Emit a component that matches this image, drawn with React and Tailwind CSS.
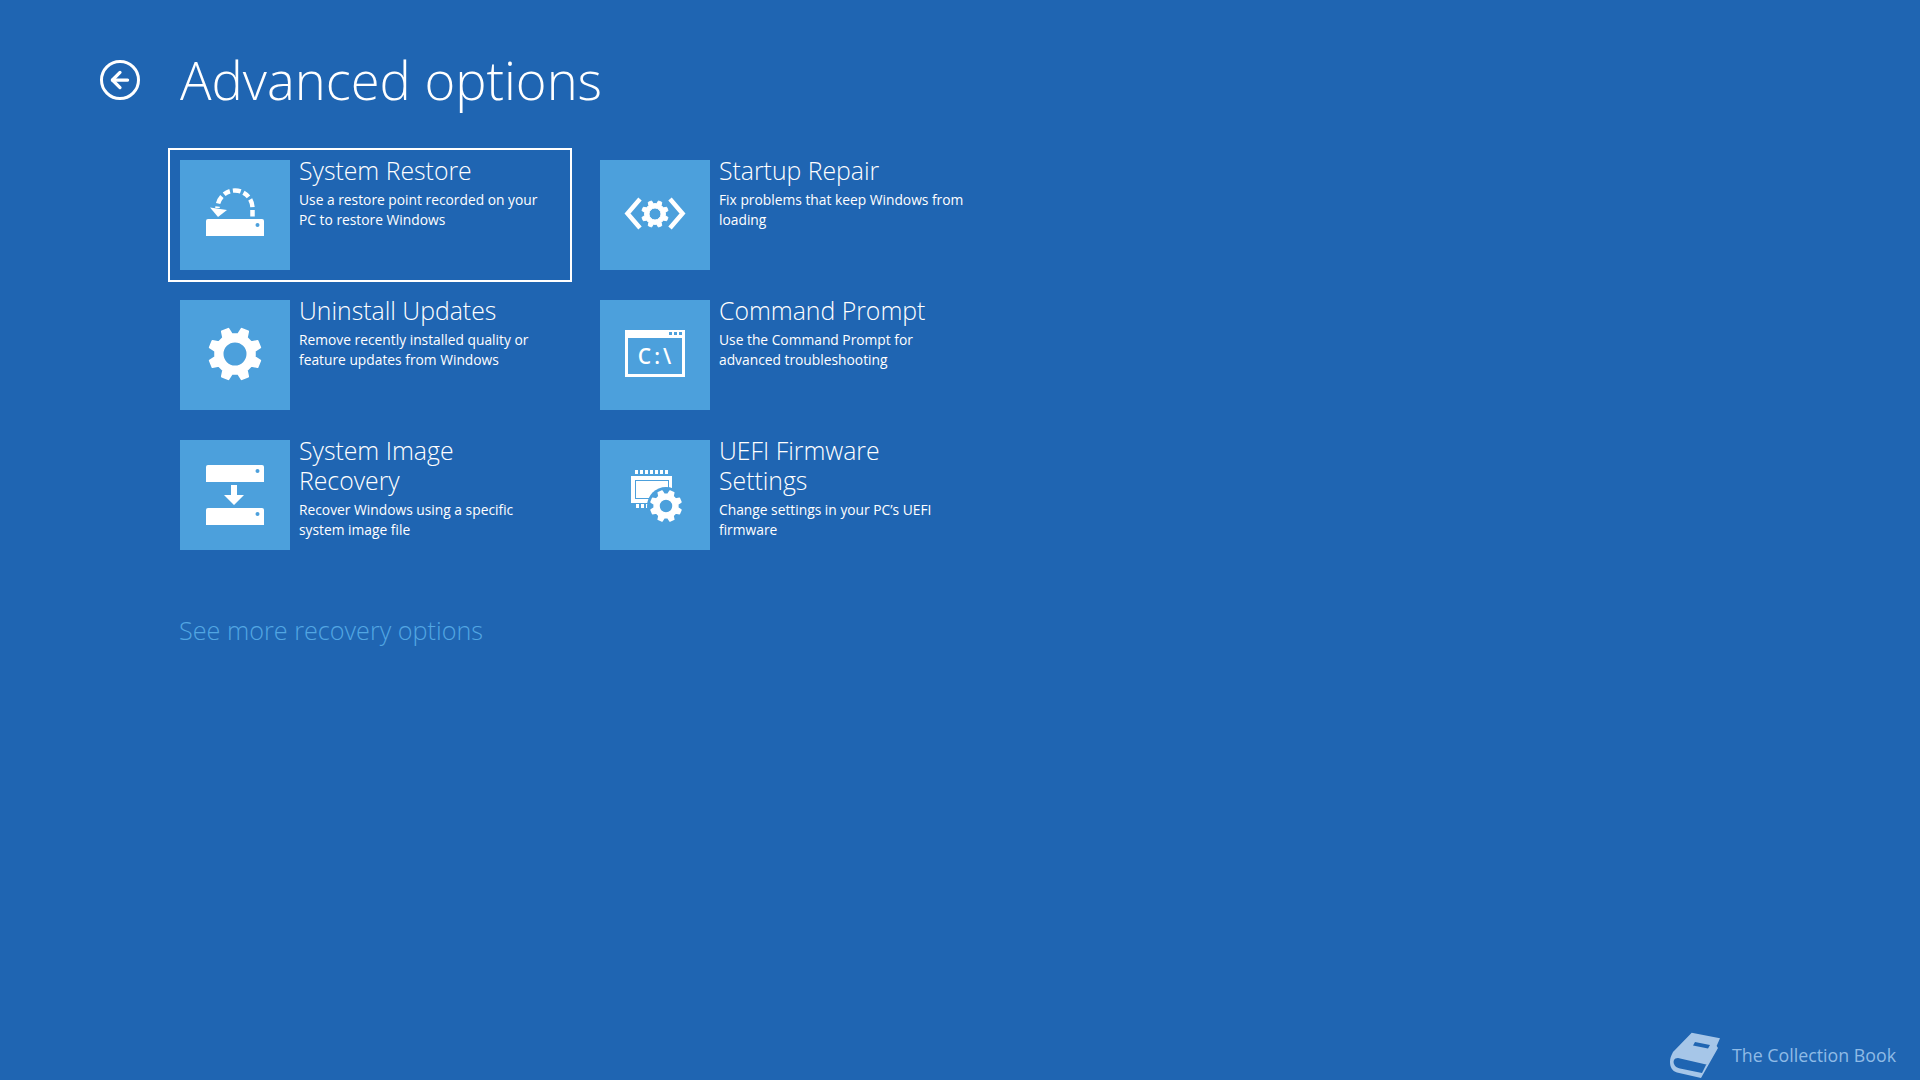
import React from 'react';
import { ArrowLeft } from 'lucide-react';

const TILE = '#4ca0dc';

// builds a toothed wheel outline, hole is cut with evenodd
const gearPath = (cx, cy, outer, root, hole, teeth = 8) => {
  const pt = (r, a) => `${(cx + r * Math.cos(a)).toFixed(2)} ${(cy + r * Math.sin(a)).toFixed(2)}`;
  const step = (Math.PI * 2) / teeth;
  let d = '';
  for (let i = 0; i < teeth; i++) {
    const a = i * step - Math.PI / 2 + step / 2;
    d += `${i === 0 ? 'M' : 'L'}${pt(root, a - step * 0.3)} L${pt(outer, a - step * 0.17)} L${pt(outer, a + step * 0.17)} L${pt(root, a + step * 0.3)} `;
  }
  d += 'Z ';
  d += `M${cx - hole} ${cy} a${hole} ${hole} 0 1 0 ${hole * 2} 0 a${hole} ${hole} 0 1 0 ${-hole * 2} 0 Z`;
  return d;
};

const Drive = ({ y }) => (
  <>
    <path d={`M26 ${y + 2} a2 2 0 0 1 2 -2 h54 a2 2 0 0 1 2 2 v15 h-58 z`} fill="white" />
    <circle cx="77.5" cy={y + 6} r="2" fill={TILE} />
  </>
);

const RestoreIcon = () => (
  <>
    <Drive y={59} />
    <path d="M72.5 56.5 L72.5 48 A17.5 17.5 0 0 0 37.5 48" fill="none" stroke="white" strokeWidth="4.5" strokeDasharray="6.5 3 8 3" />
    <path d="M30 47.5 L47 50 L38 57 Z" fill="white" />
  </>
);

const GearIcon = () => (
  <path d={gearPath(55, 54, 26, 20, 12.5)} fill="white" fillRule="evenodd" stroke="white" strokeWidth="2" strokeLinejoin="round" />
);

const RepairIcon = () => (
  <>
    <path d="M40 39 L27.5 53.5 L40 68" fill="none" stroke="white" strokeWidth="4.5" />
    <path d="M70 39 L82.5 53.5 L70 68" fill="none" stroke="white" strokeWidth="4.5" />
    <path d={gearPath(55, 54, 13.5, 10.5, 6)} fill="white" fillRule="evenodd" stroke="white" strokeWidth="1" strokeLinejoin="round" />
  </>
);

const PromptIcon = () => (
  <>
    <path fillRule="evenodd" fill="white" d="M25 30 H85 V77 H25 Z M28 38 V74 H82 V38 Z" />
    <rect x="69" y="32" width="3" height="3" fill={TILE} />
    <rect x="74" y="32" width="3" height="3" fill={TILE} />
    <rect x="79" y="32" width="3" height="3" fill={TILE} />
    <text x="56" y="64" textAnchor="middle" fill="white" fontSize="21" letterSpacing="3" fontFamily="'Open Sans', sans-serif" fontWeight="600">C:\</text>
  </>
);

const ImageIcon = () => (
  <>
    <Drive y={25} />
    <Drive y={68} />
    <path d="M51 45 H57 V55 H64 L54 65 L44 55 H51 Z" fill="white" />
  </>
);

const FirmwareIcon = () => (
  <>
    {[35, 40, 45, 50, 55, 60, 65].map((x) => (
      <rect key={x} x={x} y="30" width="3" height="4" fill="white" />
    ))}
    {[36, 41, 46].map((x) => (
      <rect key={x} x={x} y="64" width="3" height="4" fill="white" />
    ))}
    <rect x="31" y="36" width="41" height="27" fill="white" />
    <rect x="35.5" y="40.5" width="33" height="18" fill="white" stroke={TILE} strokeWidth="1" />
    <circle cx="66" cy="66" r="19" fill={TILE} />
    <path d={gearPath(66, 66, 15.5, 12, 7)} fill="white" fillRule="evenodd" stroke="white" strokeWidth="1.5" strokeLinejoin="round" />
  </>
);

const options = [
  { title: 'System Restore', desc: 'Use a restore point recorded on your PC to restore Windows', icon: RestoreIcon, selected: true },
  { title: 'Startup Repair', desc: 'Fix problems that keep Windows from loading', icon: RepairIcon },
  { title: 'Uninstall Updates', desc: 'Remove recently installed quality or feature updates from Windows', icon: GearIcon },
  { title: 'Command Prompt', desc: 'Use the Command Prompt for advanced troubleshooting', icon: PromptIcon },
  { title: 'System Image Recovery', desc: 'Recover Windows using a specific system image file', icon: ImageIcon },
  { title: 'UEFI Firmware Settings', desc: 'Change settings in your PC\u2019s UEFI firmware', icon: FirmwareIcon },
];

const Option = ({ title, desc, icon: Icon, selected }) => (
  <div className={`flex h-[134px] w-[404px] gap-[8px] border-2 p-[10px] text-white ${selected ? 'border-white' : 'border-transparent'}`}>
    <div className="h-[110px] w-[110px] shrink-0 bg-[#4ca0dc]">
      <svg viewBox="0 0 110 110" className="h-[110px] w-[110px]">
        <Icon />
      </svg>
    </div>
    <div className="-mt-[5px] w-[255px] pl-[1px]">
      <div className="text-[24.8px] leading-[30px] font-light">{title}</div>
      <div className="mt-[5px] text-[13.8px] leading-[20px]">{desc}</div>
    </div>
  </div>
);

const App = () => (
  <div className="relative h-[1080px] w-[1920px] overflow-hidden bg-[#1f65b2] font-['Open_Sans',sans-serif]">
    <div className="flex h-[148px] items-start pl-[100px] pt-[60px]">
      <div className="flex h-[40px] w-[40px] items-center justify-center rounded-full border-[3px] border-white">
        <ArrowLeft className="h-[26px] w-[26px] text-white" strokeWidth={3} />
      </div>
      <h1 className="ml-[40px] -mt-[16px] text-[52.5px] leading-[72px] font-light text-white">Advanced options</h1>
    </div>
    <div className="ml-[168px] grid w-[824px] grid-cols-[404px_404px] gap-x-4 gap-y-[6px]">
      {options.map((o) => (
        <Option key={o.title} {...o} />
      ))}
    </div>
    <div className="ml-[179px] mt-[51px] text-[25.2px] leading-[34px] font-light text-[#52a6e2]">See more recovery options</div>

    <div className="absolute bottom-[2px] right-[24px] flex items-center gap-[12px] text-[#8fbbe6]">
      <svg viewBox="0 0 50 46" className="h-[46px] w-[50px]">
        <path d="M21.7 0.7 L50 6.3 L38.3 33 L8 26 C4 26 3 29 4 32 C5 35 8 36 10 36.5 L32 41 L46 13 L48 16 L31 46 L7 40.5 C2 39 0 35 0 30 C0 26 1 24 3 20 Z" fill="#a6c6e8" />
        <path d="M25 10 L40 13 L38 16.5 L23 13.5 Z" fill="#1f65b2" />
      </svg>
      <span className="text-[17.8px] leading-[26px]">The Collection Book</span>
    </div>
  </div>
);

export default App;
